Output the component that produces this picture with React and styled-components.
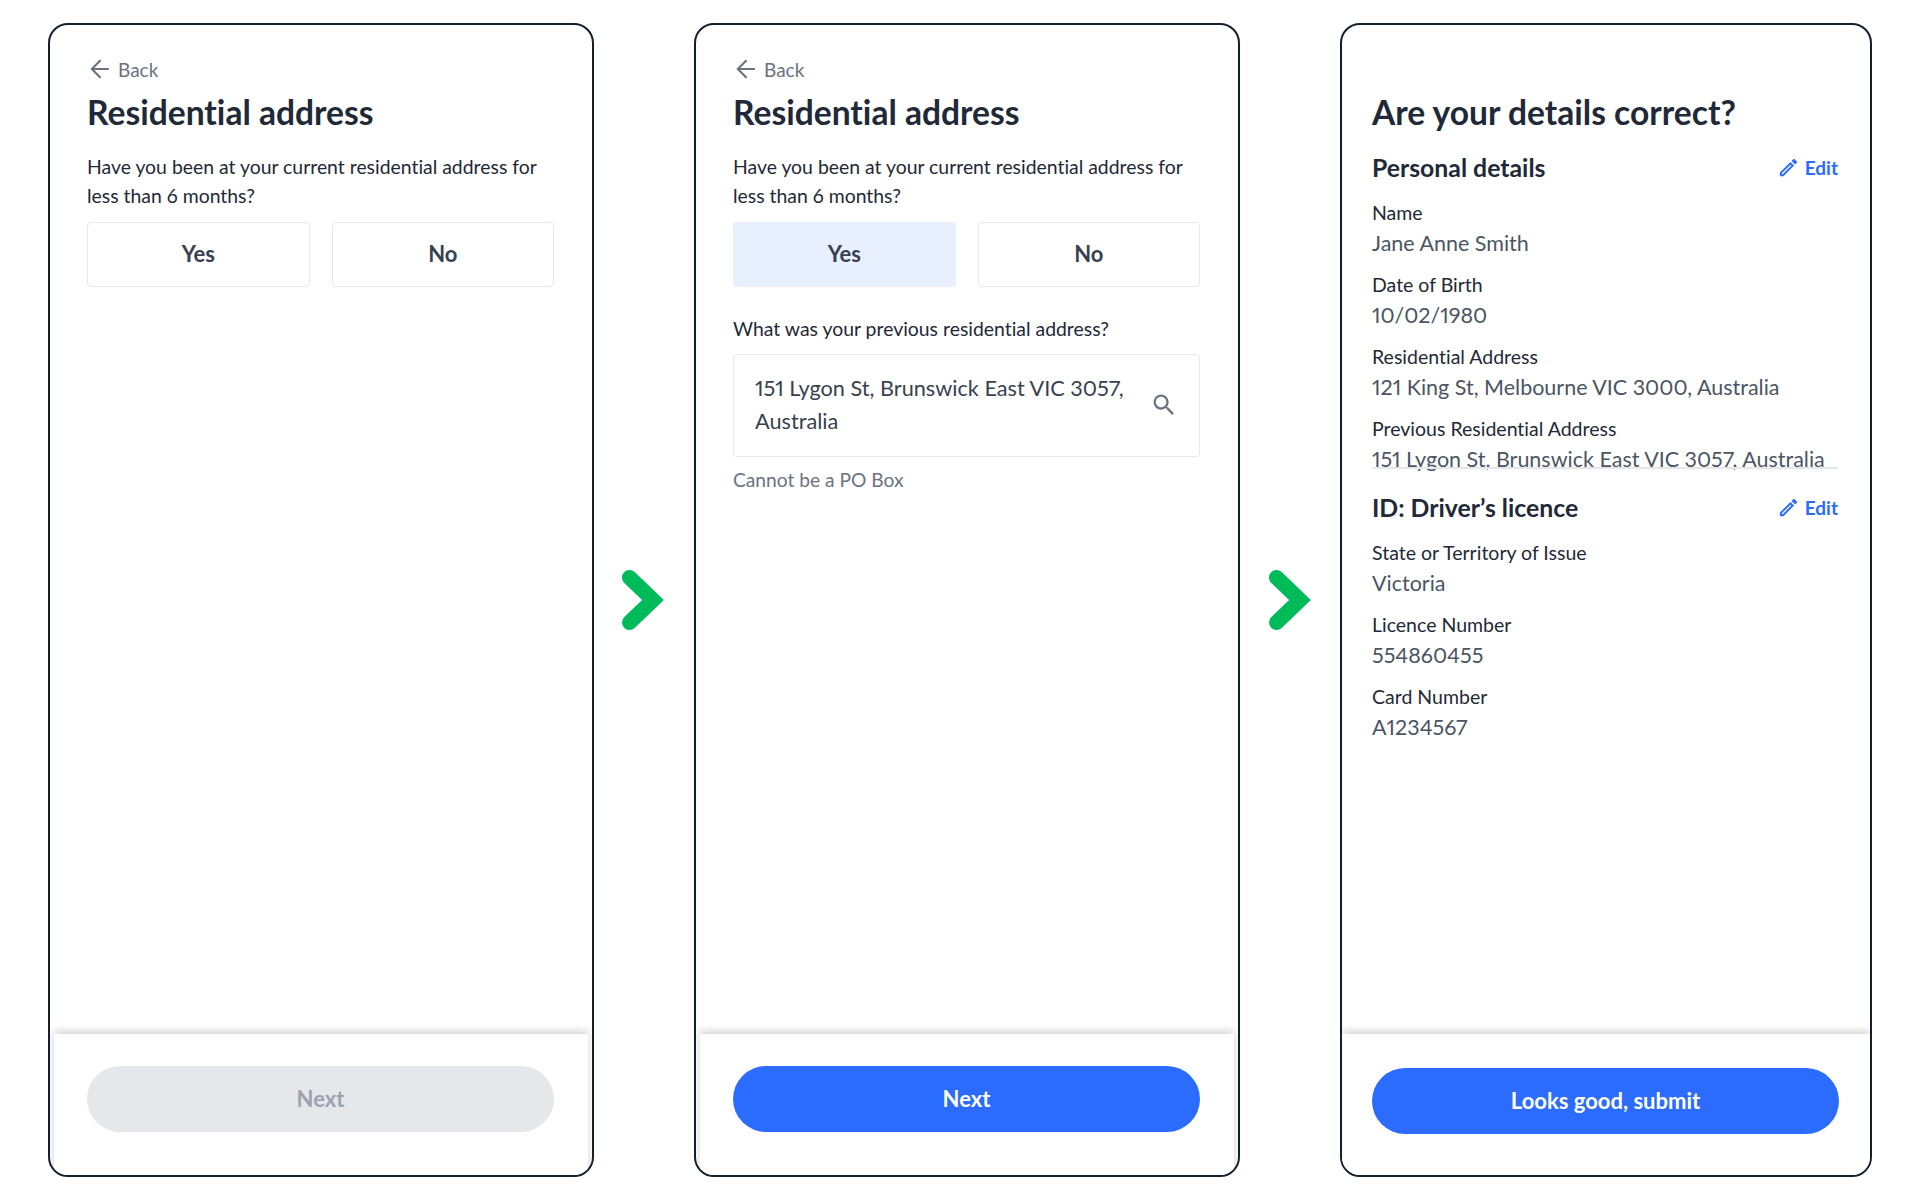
import React from 'react';
import styled, { createGlobalStyle } from 'styled-components';
import { ArrowLeft } from 'lucide-react';
import { MdSearch, MdOutlineEdit } from 'react-icons/md';

const GlobalStyle = createGlobalStyle`
  html, body {
    margin: 0;
    background: #fff;
  }
  * {
    box-sizing: border-box;
  }
`;

const Page = styled.div`
  display: flex;
  align-items: stretch;
  width: 1920px;
  height: 1200px;
  padding: 23px 48px 23px 48px;
  font-family: Lato, "Open Sans", sans-serif;
  font-variant-ligatures: none;
  font-variant-numeric: proportional-nums;
`;

const Panel = styled.section`
  display: flex;
  flex-direction: column;
  flex: 0 0 ${(p) => p.$width}px;
  border: 2px solid #14202e;
  border-radius: 20px;
  overflow: hidden;
  background: #fff;
`;

const Body = styled.div`
  flex: 1;
  display: flex;
  flex-direction: column;
  padding: ${(p) => (p.$wide ? '0 32px 0 30px' : '0 38px 0 37px')};
`;

const BackLink = styled.div`
  display: flex;
  align-items: center;
  gap: 4px;
  height: 24px;
  margin-top: 32px;
  font-size: 19px;
  color: #6b7280;

  svg {
    margin-left: -1px;
  }
`;

const Title = styled.h1`
  margin: ${(p) => (p.$noBack ? '65px' : '9px')} 0 0;
  font-size: 33.6px;
  line-height: 44px;
  font-weight: 700;
  color: #1f2937;
`;

const Question = styled.p`
  margin: ${(p) => p.$top}px 0 0;
  font-size: 19.4px;
  line-height: 29px;
  color: #1f2937;
`;

const Choices = styled.div`
  display: grid;
  grid-template-columns: 1fr 1fr;
  gap: 22px;
  margin-top: 12px;
`;

const Choice = styled.button`
  height: 65px;
  padding-bottom: 3px;
  border: ${(p) => (p.$selected ? '0' : '1.5px solid #e5e7eb')};
  border-radius: 4px;
  background: ${(p) => (p.$selected ? '#e8effe' : '#fff')};
  font: 700 22px Lato, sans-serif;
  font-variant-ligatures: none;
  color: #374151;
`;

const AddressField = styled.div`
  display: flex;
  align-items: center;
  justify-content: space-between;
  height: 103px;
  margin-top: 11px;
  padding: 0 21px 2px 21px;
  border: 1.5px solid #e5e7eb;
  border-radius: 4px;
  font-size: 21.7px;
  line-height: 33px;
  color: #374151;

  svg {
    flex: none;
    color: #6b7280;
  }
`;

const Hint = styled.div`
  margin-top: 10px;
  font-size: 19.2px;
  line-height: 26px;
  color: #6b7280;
`;

const Footer = styled.div`
  display: flex;
  align-items: flex-start;
  height: 141px;
  margin: 0 ${(p) => p.$inset}px;
  padding: ${(p) => p.$top}px ${(p) => p.$side + 1}px 0 ${(p) => p.$side}px;
  background: #fff;
  box-shadow: 0 -3px 8px rgba(0, 0, 0, 0.18);
`;

const MainButton = styled.button`
  width: 100%;
  height: 66px;
  padding-bottom: 3px;
  border: 0;
  border-radius: 33px;
  background: ${(p) => (p.disabled ? '#e5e7eb' : '#2b6bfd')};
  font: 700 22px Lato, sans-serif;
  font-variant-ligatures: none;
  color: ${(p) => (p.disabled ? '#9ca3af' : '#fff')};
`;

const Arrow = styled.div`
  flex: 0 0 100px;
  display: flex;
  align-items: center;
  justify-content: center;
  padding-right: ${(p) => p.$nudge || 0}px;
`;

const SectionHead = styled.div`
  display: flex;
  align-items: center;
  justify-content: space-between;
  height: 32px;
  margin-top: ${(p) => p.$top}px;
`;

const SectionTitle = styled.h2`
  margin: 0;
  font-size: 24.8px;
  font-weight: 700;
  color: #1f2937;
`;

const EditLink = styled.div`
  display: flex;
  align-items: center;
  gap: 5px;
  font-size: 19px;
  font-weight: 700;
  color: #2b6bfd;
`;

const Field = styled.div`
  display: flex;
  flex-direction: column;
  margin-top: ${(p) => p.$top}px;
`;

const FieldLabel = styled.div`
  font-size: 19.5px;
  line-height: 30px;
  color: #1f2937;
`;

const FieldValue = styled.div`
  font-size: 21.5px;
  line-height: 31px;
  white-space: nowrap;
  color: #4b5563;
`;

const Divider = styled.div`
  height: 2px;
  margin-top: -8px;
  background: #e5e7eb;
`;

function Chevron({ nudge }) {
  return (
    <Arrow $nudge={nudge}>
      <svg width="42" height="62" viewBox="0 0 42 62">
        <path d="M7.5 8.5 L31 31 L7.5 53.5" fill="none" stroke="#00bb5a" strokeWidth="15" strokeLinecap="round" strokeLinejoin="miter" />
      </svg>
    </Arrow>
  );
}

function Back() {
  return (
    <BackLink>
      <ArrowLeft size={28} strokeWidth={1.8} />
      Back
    </BackLink>
  );
}

function Edit() {
  return (
    <EditLink>
      <MdOutlineEdit size={23} />
      Edit
    </EditLink>
  );
}

const personal = [
  ['Name', 'Jane Anne Smith'],
  ['Date of Birth', '10/02/1980'],
  ['Residential Address', '121 King St, Melbourne VIC 3000, Australia'],
  ['Previous Residential Address', '151 Lygon St, Brunswick East VIC 3057, Australia'],
];

const licence = [
  ['State or Territory of Issue', 'Victoria'],
  ['Licence Number', '554860455'],
  ['Card Number', 'A1234567'],
];

function Fields({ rows }) {
  return rows.map(([label, value], i) => (
    <Field key={label} $top={i === 0 ? 15 : 11}>
      <FieldLabel>{label}</FieldLabel>
      <FieldValue>{value}</FieldValue>
    </Field>
  ));
}

export default function App() {
  return (
    <Page>
      <GlobalStyle />
      <Panel $width={546}>
        <Body>
          <Back />
          <Title>Residential address</Title>
          <Question $top={18}>Have you been at your current residential address for less than 6 months?</Question>
          <Choices>
            <Choice>Yes</Choice>
            <Choice>No</Choice>
          </Choices>
        </Body>
        <Footer $inset={4} $top={32} $side={33}>
          <MainButton disabled>Next</MainButton>
        </Footer>
      </Panel>
      <Chevron nudge={3} />
      <Panel $width={546}>
        <Body>
          <Back />
          <Title>Residential address</Title>
          <Question $top={18}>Have you been at your current residential address for less than 6 months?</Question>
          <Choices>
            <Choice $selected>Yes</Choice>
            <Choice>No</Choice>
          </Choices>
          <Question $top={27}>What was your previous residential address?</Question>
          <AddressField>
            <span>151 Lygon St, Brunswick East VIC 3057,<br />Australia</span>
            <MdSearch size={28} />
          </AddressField>
          <Hint>Cannot be a PO Box</Hint>
        </Body>
        <Footer $inset={4} $top={32} $side={33}>
          <MainButton>Next</MainButton>
        </Footer>
      </Panel>
      <Chevron />
      <Panel $width={532}>
        <Body $wide>
          <Title $noBack>Are your details correct?</Title>
          <SectionHead $top={17}>
            <SectionTitle>Personal details</SectionTitle>
            <Edit />
          </SectionHead>
          <Fields rows={personal} />
          <Divider />
          <SectionHead $top={22}>
            <SectionTitle>ID: Driver’s licence</SectionTitle>
            <Edit />
          </SectionHead>
          <Fields rows={licence} />
        </Body>
        <Footer $inset={0} $top={34} $side={30}>
          <MainButton>Looks good, submit</MainButton>
        </Footer>
      </Panel>
    </Page>
  );
}
